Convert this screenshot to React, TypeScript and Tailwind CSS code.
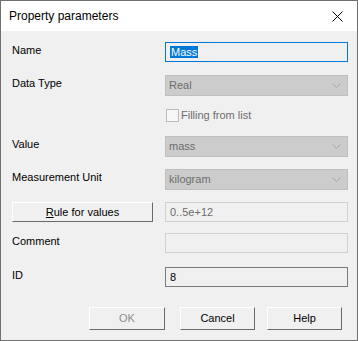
import React from 'react';

const font = { fontFamily: '"Liberation Sans", Arial, sans-serif' };

const Chevron: React.FC = () => (
  <svg width="9" height="5" viewBox="0 0 9 5" className="mr-[6px]">
    <path d="M0.5 0.5 L4.5 4.5 L8.5 0.5" fill="none" stroke="#a6a6a6" strokeWidth="1" />
  </svg>
);

const Row: React.FC<{ label?: string; mt: string; children: React.ReactNode }> = ({ label, mt, children }) => (
  <div className={`flex items-start ${mt}`}>
    <div className="w-[164px] shrink-0 pl-[11px] text-[11px] leading-[16px] text-black">{label}</div>
    {children}
  </div>
);

const Select: React.FC<{ value: string }> = ({ value }) => (
  <div className="flex h-[21px] w-[183px] items-center justify-between border border-[#bfbfbf] bg-[#cccccc] pl-[3px] text-[11px] text-[#6d6d6d]">
    <span>{value}</span>
    <Chevron />
  </div>
);

const Button: React.FC<{ children: React.ReactNode; disabled?: boolean; className?: string }> = ({ children, disabled, className }) => (
  <div
    className={`flex items-center justify-center border-t border-l border-t-white border-l-white border-b border-r border-b-[#6a6a6a] border-r-[#6a6a6a] bg-[#f0f0f0] text-[11px] ${
      disabled ? 'text-[#8d8d8d]' : 'text-black'
    } ${className ?? ''}`}
  >
    {children}
  </div>
);

export default function App() {
  return (
    <div style={font} className="flex h-[341px] w-[358px] flex-col border border-[#707070] bg-[#f0f0f0]">
      {/* Title bar */}
      <div className="flex h-[30px] items-center justify-between bg-white">
        <span className="pl-[8px] text-[12px] text-black">Property parameters</span>
        <svg width="11" height="11" viewBox="0 0 11 11" className="mr-[14px]">
          <path d="M0.5 0.5 L10.5 10.5 M10.5 0.5 L0.5 10.5" stroke="#000" strokeWidth="1" />
        </svg>
      </div>

      <Row label="Name" mt="mt-[11px]">
        <div className="flex h-[20px] w-[183px] items-center border border-[#0078d7] bg-[#f0f0f0] pl-[4px] text-[11px]">
          <span className="bg-[#0078d7] px-[1px] leading-[12px] text-white">Mass</span>
        </div>
      </Row>

      <Row label="Data Type" mt="mt-[13px]">
        <Select value="Real" />
      </Row>

      <Row mt="mt-[13px]">
        <div className="flex items-center">
          <div className="ml-[1px] h-[13px] w-[13px] border border-[#bcbcbc] bg-[#f7f7f7]" />
          <span className="ml-[2px] text-[11px] leading-[13px] text-[#6d6d6d]">Filling from list</span>
        </div>
      </Row>

      <Row label="Value" mt="mt-[14px]">
        <Select value="mass" />
      </Row>

      <Row label="Measurement Unit" mt="mt-[12px]">
        <Select value="kilogram" />
      </Row>

      <div className="mt-[12px] flex items-start">
        <Button className="ml-[11px] h-[20px] w-[141px] text-[#555555]">
          <span>
            <span className="underline">R</span>ule for values
          </span>
        </Button>
        <div className="ml-[12px] flex h-[20px] w-[183px] items-center border border-[#d0d0d0] bg-[#f0f0f0] pl-[4px] text-[11px] text-[#6d6d6d]">
          0..5e+12
        </div>
      </div>

      <Row label="Comment" mt="mt-[11px]">
        <div className="h-[20px] w-[183px] border border-[#d0d0d0] bg-[#f0f0f0]" />
      </Row>

      <Row label="ID" mt="mt-[14px]">
        <div className="flex h-[20px] w-[183px] items-center border border-[#7a7a7a] bg-[#f0f0f0] pl-[4px] text-[11px] text-black">
          8
        </div>
      </Row>

      <div className="mt-[20px] flex">
        <Button disabled className="ml-[88px] h-[23px] w-[76px]">OK</Button>
        <Button className="ml-[15px] h-[23px] w-[75px]">Cancel</Button>
        <Button className="ml-[12px] h-[23px] w-[75px]">Help</Button>
      </div>
    </div>
  );
}
